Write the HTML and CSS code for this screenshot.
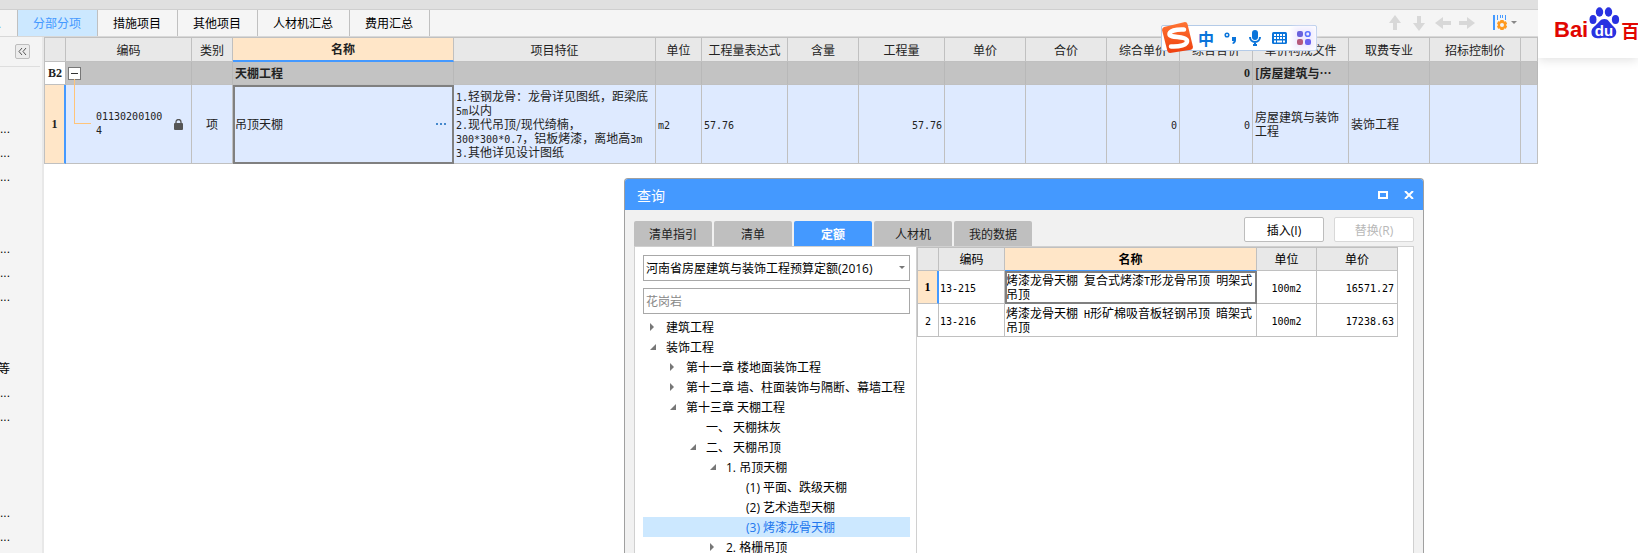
FILE: index.html
```html
<!DOCTYPE html>
<html lang="zh-CN">
<head>
    <meta charset="UTF-8">
    <meta name="viewport" content="width=device-width, initial-scale=1.0">
    <title>分部分项</title>
    <link rel="stylesheet" href="styles.css">
</head>
<body>
    <div class="app">
        <div class="titlebar"><span class="titlebar-text">清单汇总</span></div>

        <div class="toolbar">
            <nav class="tabs">
                <button class="tab tab-cut">工程信息</button>
                <button class="tab active">分部分项</button>
                <button class="tab">措施项目</button>
                <button class="tab">其他项目</button>
                <button class="tab">人材机汇总</button>
                <button class="tab">费用汇总</button>
            </nav>
            <div class="tools">
                <button class="tool" aria-label="上移"><svg width="16" height="16" viewBox="0 0 16 16"><path d="M8 0l6 8h-4v7H6V8H2z"/></svg></button>
                <button class="tool" aria-label="下移"><svg width="16" height="16" viewBox="0 0 16 16"><path d="M8 16l6-8h-4V1H6v7H2z"/></svg></button>
                <button class="tool" aria-label="左移"><svg width="16" height="16" viewBox="0 0 16 16"><path d="M0 8l8-6v4h8v4H8v4z"/></svg></button>
                <button class="tool" aria-label="右移"><svg width="16" height="16" viewBox="0 0 16 16"><path d="M16 8L8 2v4H0v4h8v4z"/></svg></button>
                <button class="tool tool-columns" aria-label="列设置">
                    <svg width="24" height="16" viewBox="0 0 24 16">
                        <path fill="#4499ff" d="M0 0h2v15H0zM4 0h1v5H4zM7 0h1v3H7zM9 0h1v3H9zM12 0h1v5h-1z"/>
                        <path fill="#ff9a1f" fill-rule="evenodd" d="M7.500 5h3l.6 1.600 1.700-.4 1.300 2.300-1.100 1.500 1.100 1.500-1.300 2.300-1.700-.4-.6 1.600h-3l-.6-1.600-1.700.4L4 11.500 5.100 10 4 8.500l1.200-2.300 1.700.4zM9 8a2 2 0 100 4 2 2 0 000-4z"/>
                        <path fill="#888" d="M18 6h6l-3 3z"/>
                    </svg>
                </button>
            </div>
        </div>

        <div class="workspace">
            <aside class="sidebar">
                <div class="sidebar-head">
                    <button class="collapse" aria-label="收起">
                        <svg width="9" height="7" viewBox="0 0 9 7"><path d="M4 0L1 3.500 4 7M8 0L5 3.500 8 7"/></svg>
                    </button>
                </div>
                <ul class="sidebar-list">
                    <li>...</li><li>...</li><li>...</li><li></li><li></li>
                    <li>...</li><li>...</li><li>...</li><li></li><li></li>
                    <li class="word">等</li><li>...</li><li>...</li><li></li><li></li><li></li>
                    <li>...</li><li>...</li>
                </ul>
            </aside>

            <main class="sheet">
                <table class="grid main-grid">
                    <colgroup>
                        <col class="w-index"><col class="w-code"><col class="w-type"><col class="w-name"><col class="w-feature">
                        <col class="w-unit"><col class="w-expr"><col class="w-content"><col class="w-qty"><col class="w-price"><col class="w-price">
                        <col class="w-total"><col class="w-total"><col class="w-file"><col class="w-price"><col class="w-limit"><col>
                    </colgroup>
                    <thead>
                        <tr>
                            <th></th><th>编码</th><th>类别</th><th class="current">名称</th><th>项目特征</th><th>单位</th>
                            <th>工程量表达式</th><th>含量</th><th>工程量</th><th>单价</th><th>合价</th><th>综合单价</th>
                            <th>综合合价</th><th>单价构成文件</th><th>取费专业</th><th>招标控制价</th><th></th>
                        </tr>
                    </thead>
                    <tbody>
                        <tr class="group">
                            <td class="index">B2</td>
                            <td><button class="toggle" aria-label="折叠"></button></td>
                            <td></td><td>天棚工程</td><td></td><td></td><td></td><td></td><td></td><td></td><td></td><td></td>
                            <td class="right serif">0</td><td class="clip">[房屋建筑与⋯</td><td></td><td></td><td></td>
                        </tr>
                        <tr class="item">
                            <td class="index">1</td>
                            <td class="code">
                                <span class="branch"></span>
                                <div class="code-row">
                                    <span class="num">01130200100<br>4</span>
                                    <svg width="9" height="11" viewBox="0 0 9 11"><path d="M2 5V3a2.500 2.500 0 015 0v2" fill="none" stroke="#555" stroke-width="1.300"/><rect y="4" width="9" height="7" rx="1" fill="#555"/></svg>
                                </div>
                            </td>
                            <td class="center">项</td>
                            <td class="selected"><div class="name-row"><span>吊顶天棚</span><button class="more" aria-label="更多"><i></i><i></i><i></i></button></div></td>
                            <td><span class="num">1.</span>轻钢龙骨：龙骨详见图纸，距梁底<br><span class="num">5m</span>以内<br><span class="num">2.</span>现代吊顶/现代绮楠，<br><span class="num">300*300*0.7</span>，铝板烤漆，离地高<span class="num">3m</span><br><span class="num">3.</span>其他详见设计图纸</td>
                            <td><span class="num">m2</span></td>
                            <td><span class="num">57.76</span></td>
                            <td></td>
                            <td class="right"><span class="num">57.76</span></td>
                            <td></td><td></td>
                            <td class="right"><span class="num">0</span></td>
                            <td class="right"><span class="num">0</span></td>
                            <td>房屋建筑与装饰工程</td><td>装饰工程</td><td></td><td></td>
                        </tr>
                    </tbody>
                </table>
            </main>
        </div>
    </div>

    <div class="side-page">
        <header class="baidu">
            <a class="baidu-logo" href="#">
                <span>Bai</span>
                <svg width="31" height="32" viewBox="0 0 31 32">
                    <g fill="#2932e1">
                        <ellipse cx="4" cy="12.500" rx="3.500" ry="4.500"/>
                        <ellipse cx="10.500" cy="5" rx="3.700" ry="4.700"/>
                        <ellipse cx="19.500" cy="5" rx="3.700" ry="4.700"/>
                        <ellipse cx="26.500" cy="12.500" rx="3.600" ry="4.500"/>
                        <path d="M15.500 12c4 0 5 3.500 8 6.500 3 2.500 4.500 5 3.500 8.500-1 3.500-4 4.500-7 4.200-3-.5-6-.5-9 0C7.500 31.500 3 31 2.500 26c-.3-4 1.500-5.500 4-7.500 3.500-3 4.500-6.500 9-6.500z"/>
                    </g>
                    <text x="15" y="29" text-anchor="middle" class="baidu-du">du</text>
                </svg>
                <span class="baidu-cn">百</span>
            </a>
        </header>
    </div>

    <div class="ime">
        <svg class="ime-logo" width="32" height="32" viewBox="0 0 32 32">
            <defs><linearGradient id="sogou" x1="0" y1="0" x2="0" y2="1"><stop offset="0" stop-color="#ff7433"/><stop offset="1" stop-color="#ee3f0e"/></linearGradient></defs>
            <path fill="url(#sogou)" d="M2 5L23 0q2 0 2.500 2L31 25q0 2-2 2.700L8 31q-2 0-2.600-2L0 8q0-2 2-3z"/>
            <path fill="none" stroke="#fff" stroke-width="4.500" stroke-linecap="round" d="M22 7.500C14 7 7 9 7.500 12.500S24 14 25 18.500 17 25 9 24.500"/>
        </svg>
        <b class="ime-mode">中</b>
        <svg width="14" height="14" viewBox="0 0 14 14"><circle cx="3" cy="4" r="1.800" fill="none" stroke="#0a74da" stroke-width="1.500"/><path fill="#0a74da" d="M8 6h4v3q0 3-3 4l-.8-1q1.500-1 1.500-2H8z"/></svg>
        <svg width="14" height="16" viewBox="0 0 14 16"><rect x="4" width="6" height="10" rx="3" fill="#0a74da"/><path d="M2 7a5 5 0 0010 0M7 12v2M5 15h4" fill="none" stroke="#0a74da" stroke-width="2"/></svg>
        <svg width="15" height="12" viewBox="0 0 15 12"><rect width="15" height="12" rx="1.500" fill="#0a74da"/><path d="M2 3h11M2 6h11" stroke="#fff" stroke-width="2" stroke-dasharray="2 1"/><path d="M2 9.500h2M5 9.500h5M11 9.500h2" stroke="#fff" stroke-width="2"/></svg>
        <svg class="ime-apps" width="14" height="14" viewBox="0 0 14 14"><rect width="6" height="6" rx="2" fill="#6a62dc"/><rect x="8.500" y=".8" width="4.500" height="4.500" rx="2" fill="none" stroke="#5a72ff" stroke-width="1.600"/><rect y="8" width="6" height="6" rx="2" fill="#b65a7c"/><rect x="8" y="8" width="6" height="6" rx="2" fill="#6a62f0"/></svg>
    </div>

    <section class="dialog">
        <header class="dialog-head">
            <h2>查询</h2>
            <div class="dialog-buttons">
                <button aria-label="最大化"><svg width="10" height="8" viewBox="0 0 10 8"><path d="M1 1h8v6H1z"/></svg></button>
                <button aria-label="关闭"><svg width="10" height="8" viewBox="0 0 10 8"><path d="M1 0l8 8M9 0L1 8"/></svg></button>
            </div>
        </header>
        <div class="dialog-body">
            <div class="dialog-bar">
                <div class="dialog-tabs">
                    <button>清单指引</button>
                    <button>清单</button>
                    <button class="active">定额</button>
                    <button>人材机</button>
                    <button>我的数据</button>
                </div>
                <div class="actions">
                    <button>插入(I)</button>
                    <button disabled>替换(R)</button>
                </div>
            </div>

            <div class="panel">
                <div class="library">
                    <div class="select-box">
                        <select aria-label="定额库">
                            <option>河南省房屋建筑与装饰工程预算定额(2016)</option>
                        </select>
                    </div>
                    <input type="text" placeholder="花岗岩" aria-label="搜索">
                    <ul class="tree">
                        <li class="l1 closed">建筑工程</li>
                        <li class="l1 open">装饰工程</li>
                        <li class="l2 closed">第十一章 楼地面装饰工程</li>
                        <li class="l2 closed">第十二章 墙、柱面装饰与隔断、幕墙工程</li>
                        <li class="l2 open">第十三章 天棚工程</li>
                        <li class="l3">一、 天棚抹灰</li>
                        <li class="l3 open">二、 天棚吊顶</li>
                        <li class="l4 open">1. 吊顶天棚</li>
                        <li class="l5">(1) 平面、跌级天棚</li>
                        <li class="l5">(2) 艺术造型天棚</li>
                        <li class="l5 picked">(3) 烤漆龙骨天棚</li>
                        <li class="l4 closed">2. 格栅吊顶</li>
                    </ul>
                </div>

                <div class="results">
                    <table class="grid result-grid">
                        <colgroup><col class="w-index"><col class="w-rcode"><col class="w-rname"><col class="w-runit"><col class="w-price"></colgroup>
                        <thead>
                            <tr><th></th><th>编码</th><th class="current">名称</th><th>单位</th><th>单价</th></tr>
                        </thead>
                        <tbody>
                            <tr class="picked-row">
                                <td class="index">1</td>
                                <td><span class="num">13-215</span></td>
                                <td class="selected">烤漆龙骨天棚<span class="num"> </span>复合式烤漆<span class="num">T</span>形龙骨吊顶<span class="num"> </span>明架式<br>吊顶</td>
                                <td class="center"><span class="num">100m2</span></td>
                                <td class="right"><span class="num">16571.27</span></td>
                            </tr>
                            <tr>
                                <td class="index"><span class="num">2</span></td>
                                <td><span class="num">13-216</span></td>
                                <td>烤漆龙骨天棚<span class="num"> H</span>形矿棉吸音板轻钢吊顶<span class="num"> </span>暗架式<br>吊顶</td>
                                <td class="center"><span class="num">100m2</span></td>
                                <td class="right"><span class="num">17238.63</span></td>
                            </tr>
                        </tbody>
                    </table>
                </div>
            </div>
        </div>
    </section>
</body>
</html>
```
FILE: styles.css
```css
* {
    box-sizing: border-box;
}

body {
    margin: 0;
    height: 100vh;
    display: flex;
    position: relative;
    overflow: hidden;
    background: #fff;
    color: #000;
    font-family: "Open Sans", "Noto Sans CJK SC", sans-serif;
    font-size: 12px;
}

button, input, select {
    font: inherit;
    color: inherit;
    margin: 0;
    padding: 0;
    border: none;
    background: none;
}

ul {
    margin: 0;
    padding: 0;
    list-style: none;
}

.app {
    flex: 1;
    min-width: 0;
    display: flex;
    flex-direction: column;
}

/* top */
.titlebar {
    height: 10px;
    background: #e0e0e0;
    border-bottom: 1px solid #cfcfcf;
}

.titlebar-text {
    display: flex;
    align-items: flex-end;
    height: 2px;
    margin-left: 479px;
    line-height: 14px;
    overflow: hidden;
}

.toolbar {
    display: flex;
    justify-content: space-between;
    height: 27px;
    background: #f5f5f5;
    border-bottom: 1px solid #d8d8d8;
}

.tabs {
    display: flex;
}

.tab {
    padding: 0 16px 0 15px;
    border-right: 1px solid #c0c0c0;
    white-space: nowrap;
}

.tab.active {
    background: #cce8ff;
    color: #4499ff;
}

.tab-cut {
    display: flex;
    justify-content: flex-end;
    align-items: center;
    width: 18px;
    padding-left: 0;
    overflow: hidden;
    color: #2b6cd4;
}

.tools {
    display: flex;
    align-items: center;
    gap: 8px;
    padding-right: 21px;
}

.tool {
    display: flex;
    fill: #d8d8d8;
}

.tool-columns {
    margin-left: 10px;
}

/* left strip */
.workspace {
    flex: 1;
    display: flex;
    min-height: 0;
}

.sidebar {
    width: 44px;
    background: #f4f4f4;
    border-right: 2px solid #e8e8e8;
}

.sidebar-head {
    display: flex;
    justify-content: flex-end;
    height: 30px;
    margin-right: 2px;
    padding: 7px 10px 0 0;
    border-bottom: 1px solid #dedede;
}

.collapse {
    display: flex;
    align-items: center;
    justify-content: center;
    width: 15px;
    height: 15px;
    border: 1px solid #bdbdbd;
    border-radius: 2px;
    background: #ececec;
}

.collapse path {
    fill: none;
    stroke: #555;
}

.sidebar-list {
    padding-top: 50px;
}

.sidebar-list li {
    height: 24px;
    line-height: 24px;
    font-family: "Liberation Sans", "Noto Sans CJK SC", sans-serif;
}

.sidebar-list .word {
    display: flex;
    justify-content: flex-end;
    width: 10px;
}

/* tables */
.sheet {
    flex: 1;
    min-width: 0;
}

.grid {
    table-layout: fixed;
    border-collapse: separate;
    border-spacing: 0;
    border-top: 1px solid #c0c0c0;
    border-left: 1px solid #c0c0c0;
    font-family: "Noto Sans CJK SC", sans-serif;
    font-size: 12px;
    line-height: 14px;
    color: #222;
}

.grid th, .grid td {
    padding: 0 2px;
    border-right: 1px solid #c0c0c0;
    border-bottom: 1px solid #c0c0c0;
    text-align: left;
    white-space: nowrap;
}

.grid th {
    height: 24px;
    padding: 0;
    background: #e8e8e8;
    font-weight: normal;
    text-align: center;
}

.grid th.current {
    background: #ffe6c8;
    border-bottom: 2px solid #4499ff;
    font-weight: bold;
}

.grid .index {
    padding: 0;
    background: #fff;
    text-align: center;
}

.grid .center {
    text-align: center;
}

.grid .right {
    text-align: right;
}

.grid .selected {
    outline: 2px solid #808080;
    outline-offset: -2px;
}

.num {
    font-family: "DejaVu Sans Mono", monospace;
    font-size: 10px;
    line-height: 10px;
}

.main-grid {
    width: 100%;
}

.w-index { width: 21px; }
.w-code { width: 126px; }
.w-type { width: 41px; }
.w-name { width: 221px; }
.w-feature { width: 202px; }
.w-unit { width: 46px; }
.w-expr { width: 86px; }
.w-content { width: 71px; }
.w-qty { width: 86px; }
.w-price { width: 81px; }
.w-total { width: 73px; }
.w-file { width: 96px; }
.w-limit { width: 91px; }
.w-rcode { width: 66px; }
.w-rname { width: 252px; }
.w-runit { width: 60px; }

.group td {
    height: 23px;
    background: #c3c3c3;
    border-right-color: #b8b8b8;
    font-weight: bold;
}

.group .index, .item .index, .picked-row .index, .group .serif {
    font-family: "Liberation Serif", serif;
    font-weight: bold;
}

.group .clip {
    overflow: hidden;
}

.toggle {
    display: block;
    width: 13px;
    height: 13px;
    border: 1px solid #777;
    background: linear-gradient(#333, #333) center / 7px 1px no-repeat #fff;
}

.item td {
    height: 79px;
    background: #deeaff;
}

.item td:nth-child(14) {
    white-space: normal;
}

.item .index, .picked-row .index {
    background: #ffe6c8;
    border-right: 2px solid #4499ff;
}

.item .code {
    position: relative;
}

.branch {
    position: absolute;
    left: 8px;
    top: -6px;
    width: 17px;
    height: 45px;
    border-left: 1px solid #ffc47a;
    border-bottom: 1px solid #ffc47a;
}

.code-row {
    display: flex;
    align-items: center;
    justify-content: space-between;
    padding: 0 6px 0 28px;
}

.code-row .num {
    line-height: 14px;
}

.name-row {
    display: flex;
    align-items: center;
    justify-content: space-between;
    padding-right: 5px;
}

.more {
    display: flex;
    gap: 2px;
}

.more i {
    width: 2px;
    height: 2px;
    background: #4488cc;
}

/* right page */
.side-page {
    width: 100px;
    overflow: hidden;
}

.baidu {
    height: 58px;
    padding: 7px 0 0 16px;
    box-shadow: 0 2px 10px rgba(0, 0, 0, 0.12);
}

.baidu-logo {
    display: flex;
    align-items: flex-end;
    gap: 1px;
    color: #e10601;
    font-family: "Liberation Sans", sans-serif;
    font-size: 22px;
    font-weight: bold;
    line-height: 18px;
    text-decoration: none;
}

.baidu-logo svg {
    flex: none;
}

.baidu-du {
    fill: #fff;
    font-size: 15px;
}

.baidu-cn {
    font-family: "Noto Sans CJK SC", sans-serif;
    font-size: 18px;
}

/* input method bar floating over the sheet */
.ime {
    position: absolute;
    right: 321px;
    top: 25px;
    display: flex;
    align-items: center;
    gap: 10px;
    height: 26px;
    padding: 0 5px 0 0;
    background: #fff;
    border: 1px solid #b4cbe8;
    border-radius: 2px;
}

.ime-logo {
    margin-right: -6px;
}

.ime-mode {
    color: #0a74da;
    font-family: "Noto Sans CJK SC", sans-serif;
    font-size: 16px;
    line-height: 16px;
}

.ime-apps {
    box-shadow: 0 0 6px 4px #f0ecff;
    background: #f0ecff;
}

/* query dialog */
.dialog {
    position: absolute;
    left: 624px;
    top: 178px;
    bottom: 0;
    width: 800px;
    display: flex;
    flex-direction: column;
    overflow: hidden;
    background: #f1f1f1;
    border: 1px solid #a0a0a0;
    border-bottom: none;
    border-radius: 4px 4px 0 0;
}

.dialog-head {
    display: flex;
    align-items: center;
    justify-content: space-between;
    height: 31px;
    padding: 0 9px 0 12px;
    background: #4499ff;
    color: #fff;
}

.dialog-head h2 {
    margin: 0;
    font-size: 14px;
    font-weight: normal;
}

.dialog-buttons {
    display: flex;
    gap: 16px;
}

.dialog-buttons button {
    display: flex;
}

.dialog-buttons path {
    fill: none;
    stroke: #fff;
    stroke-width: 2;
}

.dialog-body {
    flex: 1;
    min-height: 0;
    display: flex;
    flex-direction: column;
    padding: 7px 9px 0;
}

.dialog-bar {
    display: flex;
    justify-content: space-between;
}

.dialog-tabs {
    display: flex;
    gap: 2px;
    padding-top: 4px;
}

.dialog-tabs button {
    width: 78px;
    height: 25px;
    background: #bfbfbf;
    border-radius: 2px 2px 0 0;
    color: #222;
}

.dialog-tabs .active {
    background: #4499ff;
    color: #fff;
    font-weight: bold;
}

.actions {
    display: flex;
    gap: 10px;
}

.actions button {
    width: 80px;
    height: 25px;
    background: #fff;
    border: 1px solid #bdbdbd;
    border-radius: 2px;
}

.actions button:disabled {
    border-color: #d8d8d8;
    color: #b8b8b8;
}

.panel {
    flex: 1;
    min-height: 0;
    display: flex;
    background: #fff;
    border: 1px solid #d0d0d0;
    border-bottom: none;
}

.library {
    width: 282px;
    padding: 8px 6px 0 8px;
    border-right: 1px solid #d0d0d0;
    overflow: hidden;
}

.select-box {
    position: relative;
    margin-bottom: 7px;
}

.select-box::after {
    content: "";
    position: absolute;
    right: 5px;
    top: 11px;
    border: 3px solid transparent;
    border-top-color: #777;
}

.library select, .library input {
    display: block;
    width: 100%;
    height: 26px;
    padding: 0 2px;
    border: 1px solid #a8a8a8;
    border-radius: 0;
    background: #fff;
    appearance: none;
}

.library input::placeholder {
    color: #888;
}

.tree {
    padding-top: 3px;
}

.tree li {
    display: flex;
    align-items: center;
    height: 20px;
    white-space: nowrap;
}

.tree li::before {
    content: "";
    width: 8px;
    height: 8px;
    margin-right: 9px;
    flex: none;
}

.tree .closed::before {
    background: #777;
    clip-path: polygon(1px 0, 5px 4px, 1px 8px);
}

.tree .open::before {
    background: #777;
    clip-path: polygon(7px 1px, 7px 7px, 1px 7px);
}

.tree .l1 { padding-left: 6px; }
.tree .l2 { padding-left: 26px; }
.tree .l3 { padding-left: 46px; }
.tree .l4 { padding-left: 66px; }
.tree .l5 { padding-left: 86px; }

.tree .picked {
    background: #cce8ff;
    color: #2277ee;
}

.results {
    flex: 1;
    min-width: 0;
}

.result-grid {
    width: 481px;
    color: #000;
}

.result-grid th {
    height: 23px;
}

.result-grid th.current {
    border-bottom-width: 1px;
}

.result-grid td {
    height: 33px;
    padding: 0 1px;
}

.result-grid .right {
    padding-right: 3px;
}
```
